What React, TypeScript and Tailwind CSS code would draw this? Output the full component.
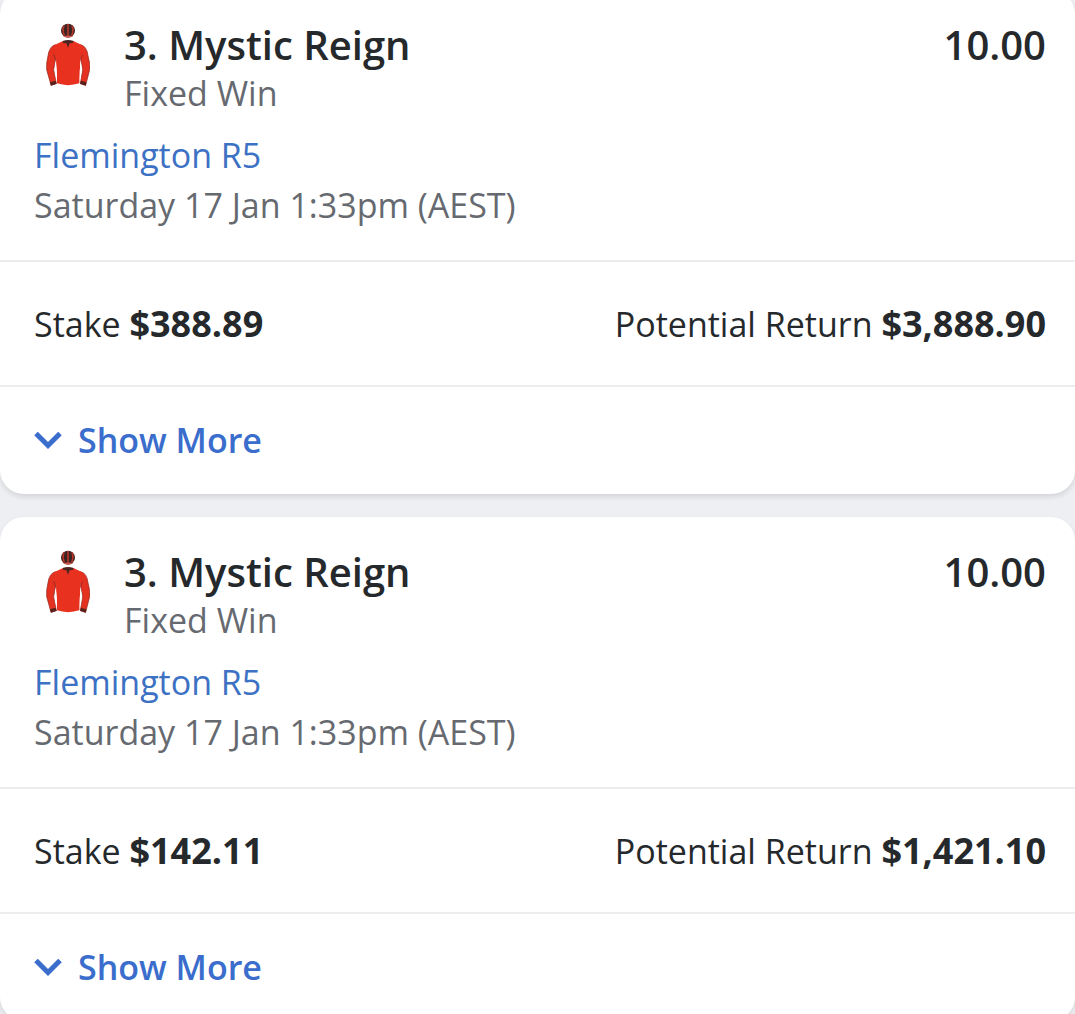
type Bet = {
    id: string;
    stake: string;
    potentialReturn: string;
};

const bets: Bet[] = [
    { id: "bet-1", stake: "$388.89", potentialReturn: "$3,888.90" },
    { id: "bet-2", stake: "$142.11", potentialReturn: "$1,421.10" },
];

function SilkIcon() {
    return (
        <svg viewBox="46 38 132 192" className="h-16 w-11" aria-hidden="true">
            {/* cap */}
            <ellipse cx="112" cy="61" rx="21" ry="21" fill="#3b2422" />
            <path d="M100 45 Q94 60 101 76 M112 41 V76 M124 45 Q130 60 123 76" fill="none" stroke="#b5352a" strokeWidth="5" />
            <path d="M97 78 Q112 73 128 78 Q112 86 97 78 Z" fill="#d05a50" />
            {/* sleeves */}
            <path d="M74 103 Q56 108 52 136 Q46 160 48 178 L61 225 L77 220 L69 178 L76 140 Z" fill="#e5311f" stroke="#8e231b" strokeWidth="2" />
            <path d="M150 103 Q169 108 172 136 Q179 160 177 178 L165 225 L149 220 L156 178 L149 140 Z" fill="#e5311f" stroke="#8e231b" strokeWidth="2" />
            <path d="M58 216 L75 211 L78 220 L61 226 Z M167 216 L151 211 L148 220 L165 226 Z" fill="#5a211c" />
            {/* body */}
            <path d="M97 92 L70 105 L76 145 Q78 185 79 219 Q112 230 146 219 Q148 185 149 145 L155 105 L128 92 L112 99 Z" fill="#e93120" />
            <path d="M69 132 L75 150 M156 132 L150 150" fill="none" stroke="#8e231b" strokeWidth="2" />
            {/* gaps between the arms and the body */}
            <path d="M75 152 Q69 180 79 213 Q80 180 75 152 Z M150 152 Q157 180 147 213 Q146 180 150 152 Z" fill="#fff" />
            <path d="M96 92 Q112 86 129 92 L126 98 L117 99 L112 112 L107 99 L98 98 Z" fill="#4a2522" />
        </svg>
    );
}

function ChevronIcon() {
    return (
        <svg viewBox="0 0 28 28" className="size-7" fill="none" stroke="currentColor" strokeWidth="5" aria-hidden="true">
            <path d="M2 7.5 L14 19.5 L26 7.5" />
        </svg>
    );
}

function BetCard({ bet }: { bet: Bet }) {
    return (
        <article className="rounded-3xl bg-white shadow-[0_3px_5px_rgba(30,35,45,0.12)]">
            <div className="pt-[31px] pr-[29px] pb-[30px] pl-[34px]">
                <div className="flex items-start">
                    <div className="mr-[34px] ml-3 pt-0.5">
                        <SilkIcon />
                    </div>
                    <div className="flex-1">
                        <h2 className="text-[40px] leading-[48px] font-semibold text-[#25292c]">3. Mystic Reign</h2>
                        <p className="text-[34px] leading-[48px] text-[#666a70]">Fixed Win</p>
                    </div>
                    <span className="text-[40px] leading-[48px] font-semibold text-[#25292c]">10.00</span>
                </div>
                <a href="#race" className="mt-[13px] block text-[34px] leading-[50px] text-[#3c71c4]">
                    Flemington R5
                </a>
                <p className="text-[34px] leading-[50px] text-[#666a70]">Saturday 17 Jan 1:33pm (AEST)</p>
            </div>
            <div className="flex justify-between border-y-2 border-[#ededef] pt-[37px] pr-[29px] pb-9 pl-[34px] text-[34px] leading-[50px] text-[#25292c]">
                <p>
                    Stake <strong className="text-[36px] font-bold">{bet.stake}</strong>
                </p>
                <p>
                    Potential Return <strong className="text-[36px] font-bold">{bet.potentialReturn}</strong>
                </p>
            </div>
            <button type="button" className="flex items-center gap-4 px-[34px] pt-7 pb-[29px] text-[34px] leading-[50px] font-semibold text-[#3a6dcc]">
                <ChevronIcon />
                Show More
            </button>
        </article>
    );
}

export default function App() {
    return (
        <main className="-mt-2.5 space-y-[23px] bg-[#edeff2] font-['Open_Sans',sans-serif]">
            {bets.map((bet) => (
                <BetCard key={bet.id} bet={bet} />
            ))}
        </main>
    );
}
